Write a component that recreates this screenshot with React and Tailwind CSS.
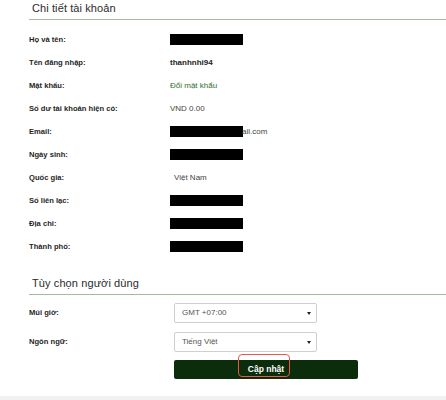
import React from 'react';

const font = { fontFamily: '"Liberation Sans", Arial, sans-serif' };

const rows = [
  { label: 'Họ và tên:', type: 'hidden' },
  { label: 'Tên đăng nhập:', type: 'bold', value: 'thanhnhi94' },
  { label: 'Mật khẩu:', type: 'link', value: 'Đổi mật khẩu' },
  { label: 'Số dư tài khoản hiện có:', type: 'text', value: 'VND 0.00' },
  { label: 'Email:', type: 'email' },
  { label: 'Ngày sinh:', type: 'hidden' },
  { label: 'Quốc gia:', type: 'text', value: 'Việt Nam', indent: true },
  { label: 'Số liên lạc:', type: 'hidden' },
  { label: 'Địa chỉ:', type: 'hidden' },
  { label: 'Thành phố:', type: 'hidden' },
];

const Redacted = () => <div className="w-[73px] h-[11px] bg-black" />;

const Value = ({ row }) => {
  if (row.type === 'hidden') return <Redacted />;
  if (row.type === 'email')
    return (
      <div className="flex items-center">
        <Redacted />
        <span className="text-[8px] text-[#444] -ml-[1px]">ail.com</span>
      </div>
    );
  if (row.type === 'bold') return <span className="text-[8px] font-bold text-[#222]">{row.value}</span>;
  if (row.type === 'link') return <span className="text-[8px] text-[#2f6f2f]">{row.value}</span>;
  return <span className={`text-[8px] text-[#444] ${row.indent ? 'pl-[4px]' : ''}`}>{row.value}</span>;
};

const SectionTitle = ({ children, className = '' }) => (
  <div className={`h-[20px] border-b border-[#9dbd9d] pl-[3px] pt-[2px] ${className}`}>
    <h2 className="text-[11px] leading-[13px] text-[#2b2b2b] tracking-[0.1px]">{children}</h2>
  </div>
);

const Select = ({ value }) => (
  <div className="w-[143px] h-[20px] bg-white border border-[#cfcfcf] rounded-[2px] flex items-center justify-between pl-[7px] pr-[5px]">
    <span className="text-[8px] text-[#555]">{value}</span>
    <span className="w-0 h-0 border-l-[2.5px] border-r-[2.5px] border-t-[3px] border-l-transparent border-r-transparent border-t-[#222]" />
  </div>
);

export default function App() {
  return (
    <div className="w-[446px] h-[400px] bg-white overflow-hidden flex flex-col" style={font}>
      <div className="pl-[29px]">
        <SectionTitle>Chi tiết tài khoản</SectionTitle>

        <div className="mt-[8px]">
          {rows.map((row) => (
            <div key={row.label} className="h-[23px] flex items-center">
              <div className="w-[141px] text-[7.6px] font-bold text-[#1f1f1f]">{row.label}</div>
              <Value row={row} />
            </div>
          ))}
        </div>

        <SectionTitle className="mt-[17px]">Tùy chọn người dùng</SectionTitle>

        <div className="mt-[8px] flex flex-col gap-[9px]">
          <div className="flex items-center">
            <div className="w-[145px] text-[7.6px] font-bold text-[#1f1f1f]">Múi giờ:</div>
            <Select value="GMT +07:00" />
          </div>
          <div className="flex items-center">
            <div className="w-[145px] text-[7.6px] font-bold text-[#1f1f1f]">Ngôn ngữ:</div>
            <Select value="Tiếng Việt" />
          </div>
        </div>

        <div className="mt-[8px] pl-[145px]">
          <button className="relative w-[184px] h-[19px] bg-[#0b2d0b] rounded-[2px] flex items-center justify-center">
            <span className="text-[8.5px] font-bold text-white">Cập nhật</span>
            <span className="absolute left-[64px] top-[-6px] w-[52px] h-[23px] border-[1.5px] border-[#e9564d] rounded-[4px]" />
          </button>
        </div>
      </div>

      <div className="mt-[17px] flex-1 bg-[#f1f1f1]" />
    </div>
  );
}
